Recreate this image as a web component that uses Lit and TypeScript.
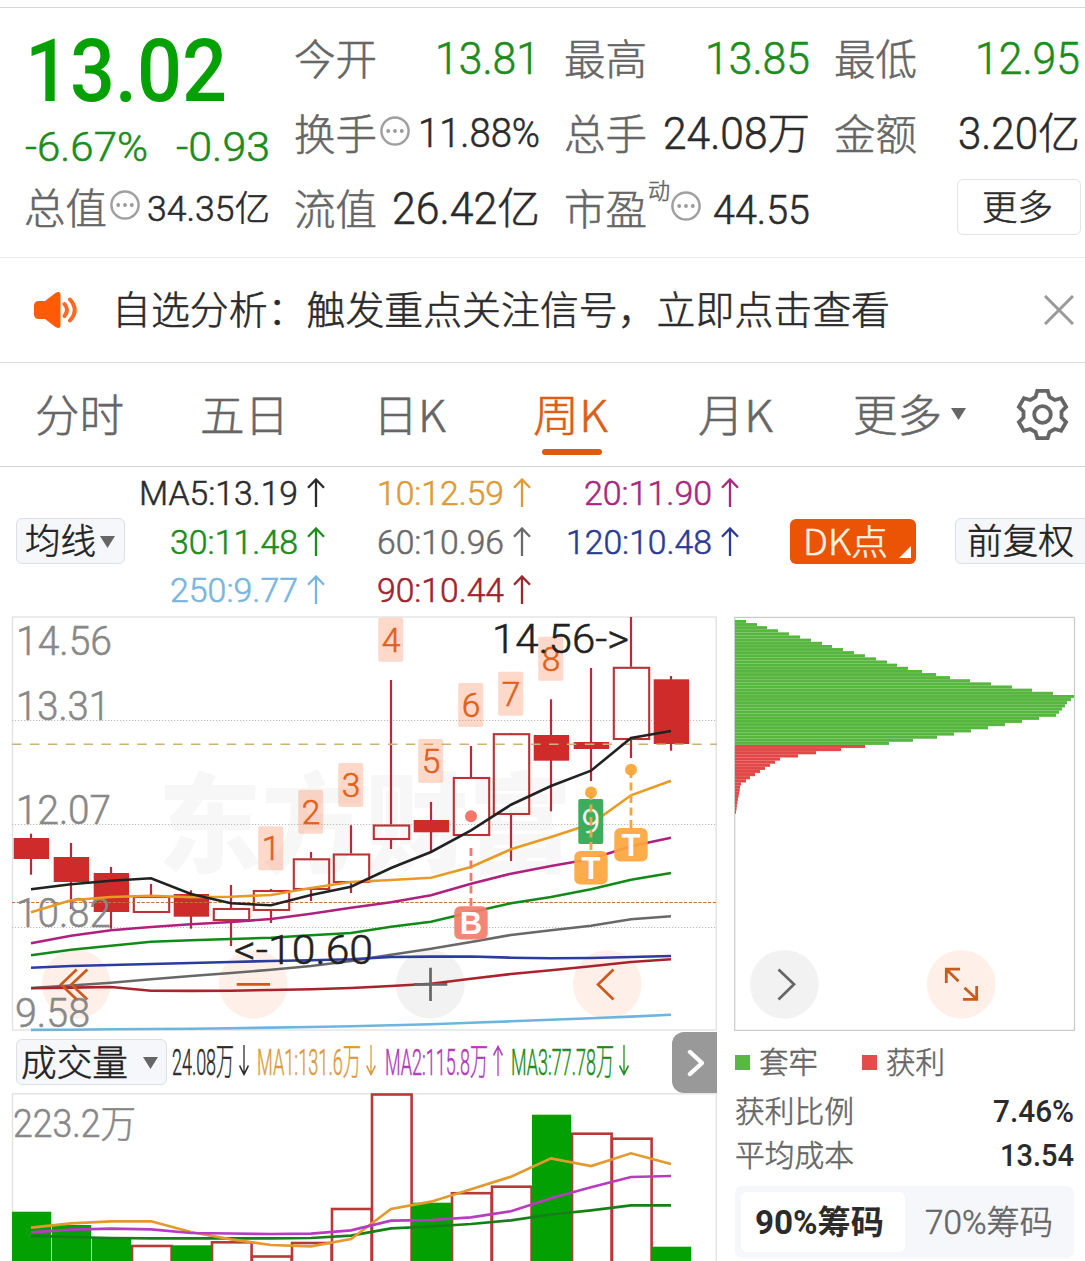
import { LitElement, html, svg, css } from "lit";
import { customElement } from "lit/decorators.js";

/** Text fitted to an exact width; the box's bottom edge is the baseline. */
const fit = (s: string, w: number, size: number, cls = "") => html`<svg
  class="fit ${cls}" width=${w} height="24"
><text x="0" y="24" font-size=${size} textLength=${w} lengthAdjust="spacingAndGlyphs">${s}</text></svg>`;

/** Same idea inside a chart, at chart coordinates. */
const label = (s: string, x: number, y: number, w: number, size: number, cls: string) =>
  svg`<text class=${cls} x=${x} y=${y} font-size=${size} textLength=${w} lengthAdjust="spacingAndGlyphs">${s}</text>`;

const dots = html`<svg class="dots" width="30" height="30" viewBox="0 0 30 30">
  <circle cx="15" cy="15" r="13.6" fill="none" stroke="#a0a0a0" stroke-width="2.5" />
  <circle cx="8.2" cy="15" r="1.9" fill="#999" /><circle cx="15" cy="15" r="1.9" fill="#999" /><circle cx="21.8" cy="15" r="1.9" fill="#999" />
</svg>`;

const caret = html`<svg class="caret" width="15" height="12" viewBox="0 0 15 12"><path d="M0 0H15L7.5 12Z" fill="#666" /></svg>`;

const arrow = (up: boolean, w: number, h: number) => html`<svg class="arrow" width=${w} height=${h} viewBox="0 0 18 30" preserveAspectRatio="none">
  <path d=${up ? "M9 30V2M1 10L9 1.5L17 10" : "M9 0V28M1 20L9 28.5L17 20"} fill="none" stroke="currentColor" stroke-width="2.3" />
</svg>`;

const X0 = 31;
const STEP = 40;

// high, body top, body bottom, low, filled
const CANDLES: [number, number, number, number, boolean][] = [
  [833.7, 838, 859, 874.7, true],
  [843, 857, 882, 909, true],
  [867, 873, 912, 928.7, true],
  [884, 896, 912, 912, false],
  [890.3, 894, 916.7, 928.7, true],
  [885, 908, 920, 946, false],
  [889, 890, 910, 923, false],
  [852, 858.3, 889, 901, false],
  [825.3, 853.5, 882, 893, false],
  [680, 824.5, 839, 849, false],
  [802, 820, 832.3, 851, true],
  [746, 777, 835, 836, false],
  [734, 733.2, 814, 861, false],
  [699.3, 735, 760.7, 811.3, true],
  [668, 742, 749, 781, true],
  [617, 666.8, 739, 758, false],
  [676, 679.3, 744, 750.7, true],
];

const AVERAGES: [string, number[]][] = [
  ["#6fb4dd", [1029.9, 1029.7, 1029.3, 1029, 1028.7, 1028.2, 1027.6, 1027, 1026.2, 1025.3, 1024.2, 1022.8, 1021.3, 1019.8, 1018.3, 1016.6, 1014.7]],
  ["#686868", [988, 985.5, 982.7, 979.3, 976, 973, 969.7, 966, 961, 954.7, 948.7, 942, 935, 930.3, 925.7, 919.3, 916.3]],
  ["#a9232d", [988.3, 987.6, 987, 990.7, 990.9, 990.7, 990, 989.3, 988, 986, 983.7, 978.7, 974, 970.3, 966.3, 962, 959.3]],
  ["#2b3b9e", [967.7, 966, 965, 964, 963, 962, 961, 960.3, 959.3, 957, 956.6, 956.5, 957.7, 958.2, 958, 957, 956]],
  ["#128a18", [955.3, 949.7, 945.7, 941.7, 940.3, 939, 937.7, 935.3, 933, 926.7, 921.7, 912.3, 903.3, 897, 889.3, 879.7, 873]],
  ["#b0207e", [943.3, 935.7, 930.3, 927, 924.3, 922, 919, 913.7, 907.7, 902.3, 895.3, 883.7, 873.7, 866, 859, 846.3, 837.7]],
  ["#e89b22", [912.3, 900.3, 897, 895.7, 897.3, 896.7, 895, 888, 882, 880, 877.7, 867, 849.3, 837, 824, 795.3, 780.7]],
  ["#222", [889.3, 884.3, 880.7, 878.3, 894, 903.3, 905.3, 895, 886.7, 868, 852, 830.3, 804.7, 786, 770.7, 738, 731]],
];

// number tags above the candles: candle index, top edge
const TAGS: [number, number][] = [[6, 826.3], [7, 789.7], [8, 763], [9, 617.8], [10, 739], [11, 683], [12, 671.7], [13, 636.7]];

const VOLUME: [number, boolean][] = [
  [1211.7, true], [1225, true], [1237, true], [1246, false], [1245.3, true], [1242.3, false], [1256.5, false], [1243, false],
  [1209, false], [1094.5, false], [1202.7, true], [1193.2, false], [1186.7, false], [1114.7, true], [1133.7, false], [1138.7, false], [1246.7, true],
];

const VOLUME_MA: [string, number[]][] = [
  ["#168018", [1236, 1237, 1238, 1238.3, 1238.3, 1238.3, 1238.3, 1238, 1235.7, 1228.3, 1226.5, 1224, 1220.3, 1214.5, 1210.3, 1205.3, 1205.3]],
  ["#e39a2c", [1227.7, 1223.3, 1221.3, 1221.3, 1232, 1239.3, 1245, 1246.3, 1239, 1209, 1201.7, 1189.3, 1176.7, 1158.3, 1166, 1153.3, 1164]],
  ["#b83cc0", [1232.3, 1229.7, 1228.7, 1229.3, 1233, 1233.5, 1234, 1233.7, 1230.3, 1220.7, 1220, 1217.3, 1211.3, 1198.3, 1187.3, 1177, 1176]],
];

const CHIPS_LOCKED = [
  11, 22, 32, 43, 54, 65, 76, 87, 97, 108, 119, 130, 141, 152, 162, 173, 187, 201, 215, 235, 256, 277, 297, 318, 339,
  336, 332, 330, 327, 324, 321, 304, 287, 270, 253, 236, 219, 202, 178, 154,
];
const CHIPS_PROFIT = [130, 106, 81, 63, 45, 40, 35, 30, 25, 20, 15, 11, 6, 5, 4.6, 4, 3.4, 2.8, 2.3, 1.8, 1.4, 1];

const points = (ys: number[]) => ys.map((y, i) => `${X0 + i * STEP},${y}`).join(" ");

const badge = (letter: string, x: number, y: number, color: string) => svg`
  <rect x=${x - 16.7} y=${y} width="33.4" height="33.4" rx="6" fill=${color} fill-opacity=".93" />
  <text class="mark" x=${x} y=${y + 28} text-anchor="middle" font-size="31">${letter}</text>`;

@customElement("app-root")
export class AppRoot extends LitElement {
  static styles = css`
    :host { display: block; width: 1085px; height: 1261px; overflow: hidden; background: #fff; color: #2b2b2b;
      font-family: Roboto, "Noto Sans CJK SC", sans-serif; }
    * { box-sizing: border-box; }
    svg { display: block; flex: none; }
    text { fill: currentColor; font-weight: 300; stroke: currentColor; stroke-width: .55px; }
    .fit { overflow: visible; }
    .cjk { font-family: "Noto Sans CJK SC", sans-serif; position: relative; top: 1px; left: -1px; }
    .bold text { font-weight: 500; stroke-width: 0; }
    .grey { color: #666; }
    .green { color: #1c8c1c; }
    .up2 { margin-bottom: 2px; }
    .bar { height: 8px; border-bottom: 1px solid #d3dad9; }
    .quote { height: 250px; padding-left: 25px; display: grid; grid-template-columns: repeat(4, 245px); column-gap: 25px;
      border-bottom: 1px solid #e9e9e9; }
    .col { display: flex; flex-direction: column; }
    .cell { height: 75px; display: flex; align-items: flex-end; justify-content: space-between; }
    .cell.first { height: 66px; }
    .price { height: 93px; color: #04a004; display: flex; align-items: flex-end; padding-left: 0; }
    .change { height: 59.5px; color: #1c8c1c; display: flex; align-items: flex-end; justify-content: space-between; }
    .cap { height: 62.5px; }
    .group { display: flex; align-items: flex-end; }
    .dots { margin: 0 0 3px 1.5px; }
    .sup { margin: 0 0 26px 1px; }
    .sup + .dots { margin-left: 0; }
    .more { width: 124px; height: 56px; border: 1.5px solid #e4e4e4; border-radius: 6px; display: flex; justify-content: center;
      align-items: flex-end; padding-bottom: 15.5px; margin: 0 -.5px -11px auto; }
    .notice { height: 105px; display: flex; align-items: center; border-bottom: 1px solid #d6dad9; padding: 0 11px 0 33px; }
    .notice .fit { margin: 2px auto 0 35px; }
    .tabs { height: 104px; display: flex; border-bottom: 1px solid #d0d6d5; color: #666; align-items: flex-end; padding: 0 0 35px 36px; }
    .tab { display: flex; align-items: flex-end; }
    .tabs .caret { margin: 0 0 11px 8px; }
    .gear { margin: 0 0 -10px 50px; }
    .active { color: #dd5d16; position: relative; }
    .active::after { content: ""; position: absolute; left: 8px; top: 42px; width: 60px; height: 6px; border-radius: 3px; background: #dd5a12; }
    .mas { height: 145px; display: flex; align-items: flex-start; padding-left: 16px; }
    .btn { height: 46px; border: 1px solid #dcdfe3; background: #f6f7fa; border-radius: 6px; display: flex; align-items: flex-end; color: #222; }
    .avg { width: 109px; margin-top: 51px; padding: 0 0 10px 9px; }
    .avg .caret { margin: 0 0 5px 3px; }
    .legend { display: grid; grid-template-columns: 200px 206px 208px; grid-template-rows: 38px 48.5px 48.5px; }
    .ma { display: flex; align-items: flex-end; justify-content: flex-end; gap: 9px; }
    .ma .arrow { margin-bottom: -2px; }
    .dk { width: 126px; height: 45px; margin: 52px 0 0 51px; background: #ea5404; border-radius: 6px; color: #fff3e4; display: flex;
      align-items: flex-end; padding: 0 5px 10px 14px; justify-content: space-between; }
    .dk .corner { margin-bottom: -4px; }
    .fq { width: 140px; margin: 51px -12px 0 39px; padding: 0 0 10px 12px; flex: none; }
    .body { display: grid; grid-template-columns: 725px 360px; }
    .volhead { height: 61px; display: flex; align-items: flex-end; padding: 0 0 18px 16px; }
    .vol { width: 151px; padding: 0 0 9px 5px; margin-bottom: -10px; margin-right: 5px; }
    .vol .caret { margin: 0 0 6px 14px; }
    .vi { display: flex; align-items: flex-end; gap: 5px; margin-right: 8.4px; }
    .vi .arrow { margin-bottom: -1px; }
    .next { width: 45px; height: 61px; background: #999; border-radius: 12px 0 0 12px; display: flex; align-items: center; justify-content: center;
      margin: 0 8px -18px auto; }
    .side { padding: 0 11px 0 10px; }
    .keys { display: flex; align-items: flex-end; height: 42px; color: #666; margin-top: -2px; }
    .key { width: 15px; height: 15px; margin-right: 10px; margin-bottom: 2px; }
    .k1 { background: #5ab840; } .k2 { background: #e64b4b; margin-left: 43px; }
    .stat { display: flex; align-items: flex-end; justify-content: space-between; height: 44px; color: #666; }
    .stat .cjk { top: 0; left: 0; }
    .stat.one { height: 50px; }
    .stat .bold { color: #2b2b2b; }
    .seg { height: 72px; background: #f6f7fb; border-radius: 7px; padding: 6px; display: flex; margin-top: 19.5px; }
    .opt { width: 164px; height: 60px; border-radius: 6px; display: flex; justify-content: center; align-items: flex-end; padding-bottom: 18px; color: #666; }
    .opt + .opt { padding-left: 6px; }
    .on { background: #fff; color: #2b2b2b; padding-right: 6px; }
    .on text { font-weight: 700; stroke-width: 0; }
    .axis { fill: #888; stroke: #888; }
    .note { fill: #222; stroke: #222; }
    .num { fill: #e0601c; stroke: #e0601c; }
    .white { fill: #fff; stroke: #fff; }
    .water { fill: #f7f7f7; stroke: none; font-family: "Noto Sans CJK SC", sans-serif; font-weight: 900; }
    .mark { fill: #fff; stroke: none; font-family: "Liberation Sans", sans-serif; font-weight: 700; }
  `;

  private kline() {
    return html`<svg width="725" height="420" viewBox="0 612 725 420">
      ${label("东方财富", 158, 864, 414, 108, "water")}
      <circle cx="76.3" cy="984.3" r="34.4" fill="#fef0e9" />
      <circle cx="253.3" cy="984.3" r="34.4" fill="#fef0e9" />
      <circle cx="430.3" cy="984.3" r="34.4" fill="#f2f2f2" />
      <circle cx="607.3" cy="984.3" r="34.4" fill="#fef0e9" />
      <rect x="12.5" y="617" width="703.7" height="413" fill="none" stroke="#e0e0e0" stroke-width="1.3" />
      <g stroke="#bbb" stroke-width="1" stroke-dasharray="1.2 1.8">
        <path d="M12 720.5H717M12 824.5H717M12 927.5H717" />
      </g>
      ${CANDLES.map(([hi, top, bot, lo, filled], i) => {
        const x = X0 + i * STEP;
        return filled
          ? svg`<path d="M${x} ${hi}V${lo}" stroke="#bb2a2e" stroke-width="2.2" />
              <rect x=${x - 17.3} y=${top} width="35.3" height=${bot - top} fill="#cf2b2b" />`
          : svg`<path d="M${x} ${hi}V${top}M${x} ${bot}V${lo}" stroke="#bb2a2e" stroke-width="2.2" />
              <rect x=${x - 17.2} y=${top + 1} width="35.4" height=${bot - top - 1} fill="none" stroke="#b83236" stroke-width="2.1" />`;
      })}
      <path d="M12 744.3H717" stroke="#cdb27c" stroke-width="1.4" stroke-dasharray="9.5 8.4" />
      <path d="M12 902.5H717" stroke="#bd7440" stroke-width="1.2" stroke-dasharray="3.2 1.6" />
      ${label("14.56", 16, 655.3, 96, 41, "axis")} ${label("13.31", 16, 719.7, 94, 41, "axis")}
      ${label("12.07", 16, 823.7, 95, 41, "axis")} ${label("10.82", 16, 926.7, 95, 41, "axis")}
      ${label("9.58", 15, 1027, 75, 41, "axis")}
      ${TAGS.map(([i, y]) => svg`<rect x=${X0 + i * STEP - 12.8} y=${y} width="25" height="44" rx="2" fill="#fa7a44" fill-opacity=".29" />`)}
      ${AVERAGES.map(([c, ys]) => svg`<polyline points=${points(ys)} fill="none" stroke=${c} stroke-width="2.6" />`)}
      ${TAGS.map(([i, y], n) => svg`<text class="num" x=${X0 + i * STEP} y=${y + 33.8} font-size="33.5" text-anchor="middle">${n + 1}</text>`)}
      ${label("14.56->", 492, 653.3, 137, 41, "note")} ${label("<-10.60", 234, 963.7, 139, 41, "note")}
      <circle cx="471" cy="816.3" r="6" fill="#f67468" />
      <path d="M471 848V906" stroke="#ee7b6d" stroke-width="2.8" stroke-dasharray="8 4.5" />
      ${badge("B", 471, 906.2, "#f47c6c")}
      <rect x="578.3" y="799" width="25" height="45" rx="2" fill="#3cad5d" />
      <text class="white" x="591" y="832.5" font-size="33" text-anchor="middle">9</text>
      <circle cx="591" cy="792.5" r="6" fill="#fcab42" /><circle cx="631" cy="769.8" r="6" fill="#fcab42" />
      <path d="M591 792V850M631 770V828" stroke="#f5a53c" stroke-width="2.8" stroke-dasharray="8 4.5" />
      ${badge("T", 591, 851, "#fda63e")} ${badge("T", 631, 828, "#fda63e")}
      <g fill="none" stroke="#cc5a1c" stroke-width="2.7">
        <path d="M76.7 969.5L61 984.5L76.7 999.5M87.3 969.5L71.4 984.5L87.3 999.5" />
        <path d="M236.7 984.3H270" />
        <path d="M613.5 969.5L598 984.5L613.5 999.5" />
        <path d="M414 984.3H447.3M430.5 967.7V1001" stroke="#666" />
      </g>
    </svg>`;
  }

  private volume() {
    return html`<svg width="725" height="168" viewBox="0 1093 725 168">
      <path d="M12.5 1261V1093.9H716.2V1261" fill="none" stroke="#e0e0e0" stroke-width="1.3" />
      ${label("223.2万", 13, 1137.3, 123, 38, "axis")}
      ${VOLUME.map(([y, down], i) => down ? null
        : svg`<rect x=${12 + i * STEP} y=${y} width="39.6" height=${1270 - y} fill="none" stroke="#b83a38" stroke-width="2.6" />`)}
      ${VOLUME.map(([y, down], i) => down ? svg`<rect x=${12 + i * STEP} y=${y} width="39.2" height=${1270 - y} fill="#02a002" />` : null)}
      ${VOLUME_MA.map(([c, ys]) => svg`<polyline points=${points(ys)} fill="none" stroke=${c} stroke-width="2.7" />`)}
    </svg>`;
  }

  private chips() {
    const n = CHIPS_LOCKED.length;
    const bar = (w: number, i: number, c: string, edge: string) => svg`
      <rect x="735" y=${620 + i * 3.125} width=${w} height="3.125" fill=${edge} />
      <rect x="735" y=${620 + i * 3.125} width=${w} height="2.8" fill=${c} />`;
    return html`<svg width="350" height="420" viewBox="735 612 350 420" overflow="visible">
      <rect x="734.7" y="617.4" width="339.8" height="413" fill="none" stroke="#c9c9c9" stroke-width="1.2" />
      ${CHIPS_LOCKED.map((w, i) => bar(w, i, "#57b63f", "#8fd07c"))}
      ${CHIPS_PROFIT.map((w, i) => bar(w, n + i, "#e44747", "#f08080"))}
      <circle cx="784.3" cy="984.3" r="34.4" fill="#f2f2f2" />
      <circle cx="961.3" cy="984.3" r="34.4" fill="#fef0e9" />
      <path d="M778.5 969.5L794 984.3L778.5 999.5" fill="none" stroke="#666" stroke-width="2.7" />
      <path d="M946.3 983V969.2H960M947 970L958.5 981.3M964.5 987.7L976.5 999M963 999.3H976.7V986" fill="none" stroke="#cc5a1c" stroke-width="2.8" />
    </svg>`;
  }

  render() {
    const ma = (s: string, w: number, color: string) =>
      html`<div class="ma" style="color:${color}">${fit(s, w, 34)}${arrow(true, 18, 29)}</div>`;
    const vi = (s: string, w: number, color: string, up: boolean) =>
      html`<div class="vi" style="color:${color}">${fit(s, w, 37)}${arrow(up, 10, 31)}</div>`;
    return html`
      <div class="bar"></div>
      <section class="quote">
        <div class="col">
          <div class="price">${fit("13.02", 202, 88, "bold")}</div>
          <div class="change">${fit("-6.67%", 123, 41)}${fit("-0.93", 94, 41)}</div>
          <div class="cell cap">
            <div class="group">${fit("总值", 83, 41.5, "cjk grey")}${dots}</div>${fit("34.35亿", 123, 35.5, "up2")}
          </div>
        </div>
        <div class="col">
          <div class="cell first">${fit("今开", 83, 41.5, "cjk grey")}${fit("13.81", 105, 43.6, "green")}</div>
          <div class="cell"><div class="group">${fit("换手", 83, 41.5, "cjk grey")}${dots}</div>${fit("11.88%", 122, 40, "up2")}</div>
          <div class="cell">${fit("流值", 83, 41.5, "cjk grey")}${fit("26.42亿", 148, 43.6)}</div>
        </div>
        <div class="col">
          <div class="cell first">${fit("最高", 83, 41.5, "cjk grey")}${fit("13.85", 105, 43.6, "green")}</div>
          <div class="cell">${fit("总手", 83, 41.5, "cjk grey")}${fit("24.08万", 147, 43.6)}</div>
          <div class="cell">
            <div class="group">${fit("市盈", 83, 41.5, "cjk grey")}${fit("动", 22, 22.5, "cjk grey sup")}${dots}</div>${fit("44.55", 97, 40)}
          </div>
        </div>
        <div class="col">
          <div class="cell first">${fit("最低", 83, 41.5, "cjk grey")}${fit("12.95", 105, 43.6, "green")}</div>
          <div class="cell">${fit("金额", 83, 41.5, "cjk grey")}${fit("3.20亿", 122, 43.6)}</div>
          <div class="cell"><div class="more">${fit("更多", 71, 35.5, "cjk")}</div></div>
        </div>
      </section>

      <section class="notice">
        <svg width="45" height="36" viewBox="0 0 45 36">
          <path d="M6 9H12L22.5 1Q27.5-1.5 27.5 3V33Q27.5 37.5 22.5 35L12 27H6Q1 27 1 22V14Q1 9 6 9Z" fill="#ff5a05" />
          <path d="M31.5 12Q36.5 18 31.5 24M37 7.5Q46.5 18 37 28.5" fill="none" stroke="#fb6a22" stroke-width="4" stroke-linecap="round" />
        </svg>
        ${fit("自选分析：触发重点关注信号，立即点击查看", 778, 38.9, "cjk")}
        <svg width="30" height="30" viewBox="0 0 30 30"><path d="M1 1L29 29M29 1L1 29" stroke="#999" stroke-width="3" /></svg>
      </section>

      <nav class="tabs">
        <div class="tab" style="width:165px">${fit("分时", 89, 44.5, "cjk")}</div>
        <div class="tab" style="width:173px">${fit("五日", 89, 44.5, "cjk")}</div>
        <div class="tab" style="width:160px">${fit("日K", 73, 44.5, "cjk")}</div>
        <div class="tab active" style="width:165px">${fit("周K", 75, 44.5, "cjk")}</div>
        <div class="tab" style="width:154.5px">${fit("月K", 75, 44.5, "cjk")}</div>
        <div class="tab">${fit("更多", 89, 44.5, "cjk")}${caret}</div>
        <svg class="gear" width="53" height="53" viewBox="-26.5 -26.5 53 53" fill="none" stroke="#666" stroke-width="3.8">
          <path d="M-5.2-23.6H5.2L7-17.5L12.2-14.5L18.6-16.3L23.6-7.6L19-3V3L23.6 7.6L18.6 16.3L12.2 14.5L7 17.5L5.2 23.6H-5.2L-7 17.5L-12.2 14.5L-18.6 16.3L-23.6 7.6L-19 3V-3L-23.6-7.6L-18.6-16.3L-12.2-14.5L-7-17.5Z" />
          <circle r="8.3" />
        </svg>
      </nav>

      <section class="mas">
        <div class="btn avg">${fit("均线", 71, 35.5, "cjk")}${caret}</div>
        <div class="legend">
          ${ma("MA5:13.19", 159, "#2b2b2b")} ${ma("10:12.59", 127, "#df9a35")} ${ma("20:11.90", 128, "#a8287e")}
          ${ma("30:11.48", 128, "#1c8c1c")} ${ma("60:10.96", 127, "#6a6a6a")} ${ma("120:10.48", 146, "#2b3b95")}
          ${ma("250:9.77", 128, "#78b6dd")} ${ma("90:10.44", 127, "#a0242c")}
        </div>
        <div class="dk">${fit("DK点", 85, 35.5, "cjk")}<svg class="corner" width="12" height="12"><path d="M12 0V12H0Z" fill="#fff" /></svg></div>
        <div class="btn fq">${fit("前复权", 107, 35.5, "cjk")}</div>
      </section>

      <div class="body">
        <div>
          ${this.kline()}
          <div class="volhead">
            <div class="btn vol">${fit("成交量", 107, 36, "cjk")}${caret}</div>
            ${vi("24.08万", 62, "#2b2b2b", false)} ${vi("MA1:131.6万", 104, "#dc9a3c", false)}
            ${vi("MA2:115.8万", 103, "#b03cb8", true)} ${vi("MA3:77.78万", 103, "#1c8c1c", false)}
            <div class="next"><svg width="18" height="28" viewBox="0 0 18 28"><path d="M4 3L16 14L4 25" fill="none" stroke="#fff" stroke-width="4.4" stroke-linecap="round" stroke-linejoin="round" /></svg></div>
          </div>
          ${this.volume()}
        </div>
        <div class="side">
          ${this.chips()}
          <div class="keys">
            <i class="key k1"></i>${fit("套牢", 59, 29.6, "cjk")}
            <i class="key k2"></i>${fit("获利", 59, 29.6, "cjk")}
          </div>
          <div class="stat one">${fit("获利比例", 119, 29.7, "cjk")}${fit("7.46%", 81, 31.5, "bold")}</div>
          <div class="stat">${fit("平均成本", 119, 29.7, "cjk")}${fit("13.54", 74, 31.5, "bold")}</div>
          <div class="seg">
            <div class="opt on">${fit("90%筹码", 129, 33)}</div>
            <div class="opt">${fit("70%筹码", 128, 33)}</div>
          </div>
        </div>
      </div>
    `;
  }
}
